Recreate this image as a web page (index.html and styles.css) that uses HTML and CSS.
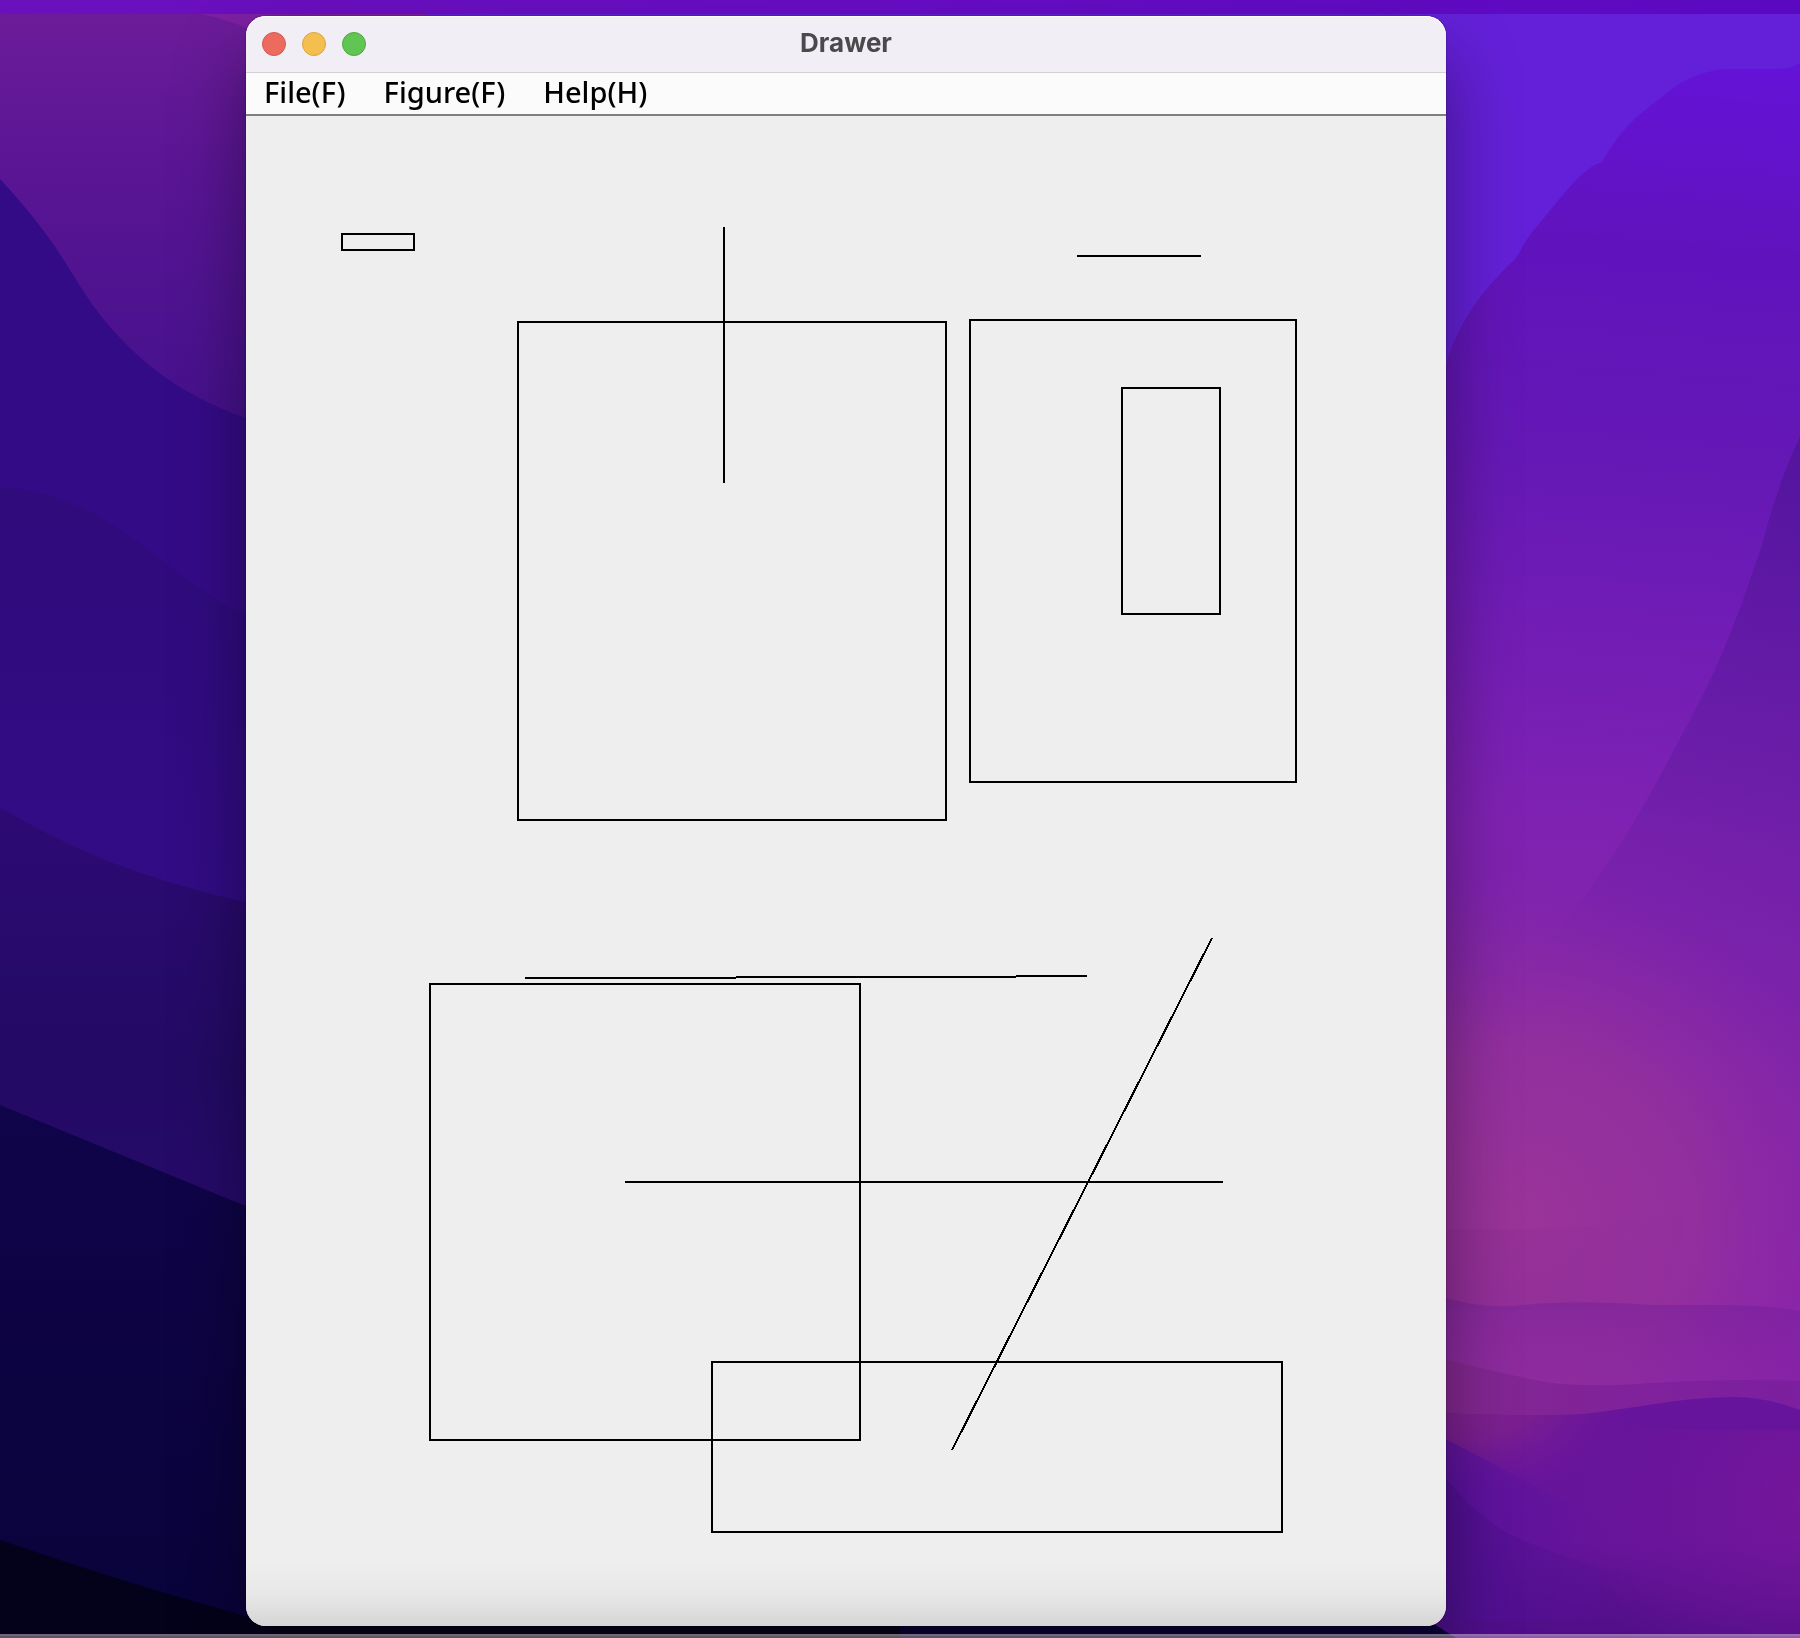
FILE: index.html
```html
<!DOCTYPE html>
<html lang="en">
<head>
  <meta charset="utf-8">
  <title>Drawer</title>
  <link rel="stylesheet" href="styles.css">
</head>
<body>
  <svg class="wallpaper" viewBox="0 0 1800 1638" preserveAspectRatio="none" aria-hidden="true">
    <defs>
      <linearGradient id="plum" gradientUnits="userSpaceOnUse" x1="60" y1="14" x2="60" y2="418">
        <stop offset="0" stop-color="#6c1c99"/><stop offset=".4" stop-color="#591594"/><stop offset="1" stop-color="#45118c"/>
      </linearGradient>
      <linearGradient id="indigo" x1="0" y1="0" x2="0" y2="1">
        <stop offset="0" stop-color="#2f0b7c"/><stop offset="1" stop-color="#320c86"/>
      </linearGradient>
      <linearGradient id="deep" x1="0" y1="0" x2="0" y2="1">
        <stop offset="0" stop-color="#2d0a74"/><stop offset=".6" stop-color="#230a64"/><stop offset="1" stop-color="#270a6c"/>
      </linearGradient>
      <linearGradient id="navy" x1="0" y1="0" x2="0" y2="1">
        <stop offset="0" stop-color="#10044a"/><stop offset="1" stop-color="#09033a"/>
      </linearGradient>
      <linearGradient id="violet" gradientUnits="userSpaceOnUse" x1="1700" y1="60" x2="1600" y2="1300">
        <stop offset="0" stop-color="#6512d8"/><stop offset=".15" stop-color="#6013bd"/><stop offset=".32" stop-color="#6518b5"/>
        <stop offset=".45" stop-color="#701cb5"/><stop offset=".62" stop-color="#7f22b2"/><stop offset=".78" stop-color="#8024aa"/><stop offset="1" stop-color="#8a22ac"/>
      </linearGradient>
      <linearGradient id="shade" gradientUnits="userSpaceOnUse" x1="1800" y1="436" x2="1580" y2="1010">
        <stop offset="0" stop-color="#3c1078" stop-opacity=".4"/><stop offset=".6" stop-color="#4a1890" stop-opacity=".28"/><stop offset="1" stop-color="#6018a0" stop-opacity="0"/>
      </linearGradient>
      <radialGradient id="glow" gradientUnits="userSpaceOnUse" cx="1520" cy="1220" r="350">
        <stop offset="0" stop-color="#9a3499"/><stop offset=".5" stop-color="#96329b" stop-opacity=".8"/><stop offset="1" stop-color="#8a2aa4" stop-opacity="0"/>
      </radialGradient>
      <linearGradient id="ripple" x1="0" y1="0" x2="1" y2="0">
        <stop offset="0" stop-color="#84248c" stop-opacity=".2"/><stop offset=".5" stop-color="#84248c" stop-opacity=".14"/><stop offset="1" stop-color="#84248c" stop-opacity="0"/>
      </linearGradient>
      <linearGradient id="wave" x1="0" y1="0" x2="0" y2="1">
        <stop offset="0" stop-color="#6c1c98" stop-opacity=".42"/><stop offset="1" stop-color="#8824a4" stop-opacity=".2"/>
      </linearGradient>
      <linearGradient id="band" x1="0" y1="0" x2="1" y2="0">
        <stop offset="0" stop-color="#842890"/><stop offset=".5" stop-color="#80229a"/><stop offset="1" stop-color="#7c1fa0"/>
      </linearGradient>
      <linearGradient id="dune" gradientUnits="userSpaceOnUse" x1="1600" y1="1397" x2="1600" y2="1638">
        <stop offset="0" stop-color="#66149c"/><stop offset=".6" stop-color="#67149a"/><stop offset="1" stop-color="#500e86"/>
      </linearGradient>
      <radialGradient id="ember" gradientUnits="userSpaceOnUse" cx="1470" cy="1400" r="160" gradientTransform="translate(0 560) scale(1 .6)">
        <stop offset="0" stop-color="#84248c" stop-opacity=".9"/><stop offset=".4" stop-color="#80228e" stop-opacity=".75"/><stop offset="1" stop-color="#74189a" stop-opacity="0"/>
      </radialGradient>
      <radialGradient id="berry" gradientUnits="userSpaceOnUse" cx="1800" cy="1500" r="220">
        <stop offset="0" stop-color="#78169c" stop-opacity=".8"/><stop offset="1" stop-color="#70169c" stop-opacity="0"/>
      </radialGradient>
      <linearGradient id="fold" gradientUnits="userSpaceOnUse" x1="1446" y1="1500" x2="1600" y2="1470">
        <stop offset="0" stop-color="#5410a0" stop-opacity=".7"/><stop offset="1" stop-color="#5a12a0" stop-opacity="0"/>
      </linearGradient>
      <linearGradient id="fold-low" gradientUnits="userSpaceOnUse" x1="1446" y1="1580" x2="1640" y2="1540">
        <stop offset="0" stop-color="#4c0f8c" stop-opacity=".7"/><stop offset="1" stop-color="#500e8c" stop-opacity="0"/>
      </linearGradient>
      <linearGradient id="strip" x1="0" y1="0" x2="1" y2="0">
        <stop offset="0" stop-color="#6a10bc"/><stop offset=".5" stop-color="#680dc6"/><stop offset="1" stop-color="#5a09c0"/>
      </linearGradient>
    </defs>
    <rect width="1800" height="1638" fill="#6420d8"/>
    <path fill="#7b20a2" d="M0 0H427V100H0Z"/>
    <path fill="url(#plum)" d="M0 14H200Q226 18 260 34V440H0Z"/>
    <path fill="#340b87" d="M0 179C70 255 70 280 110 327C150 372 190 400 260 423V1638H0Z"/>
    <path fill="url(#indigo)" d="M0 487C50 489 90 508 130 536C170 564 210 602 260 622V940H0Z"/>
    <path fill="url(#deep)" d="M0 807C70 850 150 882 260 905V1240H0Z"/>
    <path fill="url(#navy)" d="M0 1105L260 1212H1440L1458 1638H0Z"/>
    <path fill="#04021a" d="M0 1540Q130 1585 260 1620H900V1638H0Z"/>
    <path fill="url(#violet)" d="M1800 63Q1792 69 1775 69H1735Q1700 68 1670 90C1640 115 1625 122 1602 162C1580 168 1556 205 1537 226C1528 236 1522 248 1516 258C1490 283 1460 315 1446 365V1450H1800Z"/>
    <path fill="url(#shade)" d="M1800 436C1780 480 1772 508 1762 545C1745 595 1725 655 1695 710C1640 815 1605 880 1520 975V1200H1800Z"/>
    <path fill="url(#glow)" d="M1440 850H1800V1450H1440Z"/>
    <path fill="url(#ripple)" d="M1440 1229H1560Q1600 1226 1630 1219L1700 1216V1310H1440Z"/>
    <path fill="url(#wave)" d="M1440 1296Q1475 1308 1515 1306Q1570 1299 1650 1305H1720Q1770 1305 1800 1311V1430H1440Z"/>
    <path fill="url(#band)" d="M1440 1358Q1490 1371 1545 1382Q1590 1388 1650 1383Q1740 1378 1800 1381V1470H1440Z"/>
    <path fill="url(#dune)" d="M1440 1413Q1560 1418 1600 1412C1660 1404 1680 1398 1735 1397Q1765 1397 1800 1410V1638H1456L1434 1624Z"/>
    <path fill="url(#ember)" d="M1440 1413Q1560 1418 1600 1412L1640 1406V1500H1440Z"/>
    <path fill="url(#berry)" d="M1560 1430H1800V1638H1560Z"/>
    <path fill="url(#fold)" d="M1440 1436L1490 1462L1600 1520V1620H1440Z"/>
    <path fill="url(#fold-low)" d="M1440 1470Q1480 1525 1530 1543Q1580 1565 1640 1574V1638H1456L1440 1626Z"/>
    <rect width="1800" height="14" fill="url(#strip)"/>
  </svg>

  <main class="desktop">
    <section class="window" aria-labelledby="window-title">
      <header class="titlebar">
        <div class="lights">
          <button class="light light-close" type="button" aria-label="Close"></button>
          <button class="light light-minimize" type="button" aria-label="Minimize"></button>
          <button class="light light-zoom" type="button" aria-label="Zoom"></button>
        </div>
        <h1 class="title" id="window-title">Drawer</h1>
      </header>
      <nav class="menubar" aria-label="Menu">
        <button class="menu" type="button">File(F)</button>
        <button class="menu" type="button">Figure(F)</button>
        <button class="menu" type="button">Help(H)</button>
      </nav>
      <svg class="canvas" role="img" aria-label="Drawing">
        <g class="shapes" transform="translate(-246 -116)">
          <rect x="342" y="234" width="72" height="16"/>
          <rect x="518" y="322" width="428" height="498"/>
          <rect x="970" y="320" width="326" height="462"/>
          <rect x="1122" y="388" width="98" height="226"/>
          <rect x="430" y="984" width="430" height="456"/>
          <rect x="712" y="1362" width="570" height="170"/>
          <path d="M724 227V483"/>
          <path d="M1077 256H1201"/>
          <path d="M525 978H736M736 977H1016M1016 976H1087"/>
          <path d="M625 1182H1223"/>
          <path d="M1212 938L952 1450"/>
        </g>
      </svg>
    </section>
  </main>
  <div class="dock-edge"></div>
</body>
</html>
```
FILE: styles.css
```css
* {
  box-sizing: border-box;
}

body {
  margin: 0;
  min-height: 100vh;
  display: flex;
  background: #2c0a74;
}

.wallpaper {
  position: fixed;
  inset: 0;
  width: 100%;
  height: 100%;
}

.desktop {
  position: relative;
  flex: 1;
  display: flex;
  padding: 16px 354px 12px 246px;
  overflow: hidden;
}

.window {
  flex: 1;
  display: flex;
  flex-direction: column;
  min-width: 0;
  border-radius: 20px;
  background: #eeeeee;
  box-shadow: 0 0 2px rgba(0, 0, 0, 0.5), 0 40px 72px rgba(0, 0, 0, 0.4);
}

.titlebar {
  display: grid;
  grid-template-columns: 1fr auto 1fr;
  align-items: center;
  height: 57px;
  padding: 0 16px;
  border-bottom: 1px solid #d1d0d2;
  border-radius: 20px 20px 0 0;
  background: #f1eef6;
  box-shadow: inset 0 1px 0 #ffffff;
}

.lights {
  display: flex;
  gap: 16px;
}

.light {
  width: 24px;
  height: 24px;
  padding: 0;
  border: 1px solid;
  border-radius: 50%;
}

.light-close {
  background: #ed6a5e;
  border-color: #d55a4e;
}

.light-minimize {
  background: #f4bf4f;
  border-color: #d9a63e;
}

.light-zoom {
  background: #61c554;
  border-color: #51a73e;
}

.title {
  margin: 0;
  padding-bottom: 2px;
  font: 700 26px/32px Inter, "Liberation Sans", sans-serif;
  color: #4a494b;
}

.menubar {
  display: flex;
  align-items: flex-start;
  gap: 38px;
  height: 43px;
  padding: 0 18px;
  border-bottom: 2px solid #808080;
  background: #fbfbfb;
}

.menu {
  padding: 0;
  border: 0;
  background: none;
  font: 500 29px/38px "Noto Sans", "Open Sans", sans-serif;
  color: #000000;
}

.canvas {
  flex: 1;
  display: block;
  width: 100%;
  min-height: 0;
  border-radius: 0 0 20px 20px;
  background: linear-gradient(to top, #d5d5d5, #e8e8e8 32px, #eeeeee 64px);
}

.shapes {
  fill: none;
  stroke: #000000;
  stroke-width: 2px;
  shape-rendering: crispEdges;
}

.dock-edge {
  position: fixed;
  inset: auto 0 0;
  height: 4px;
  border-top: 2px solid rgba(225, 210, 220, 0.15);
  background: rgba(225, 210, 220, 0.4);
}
```
